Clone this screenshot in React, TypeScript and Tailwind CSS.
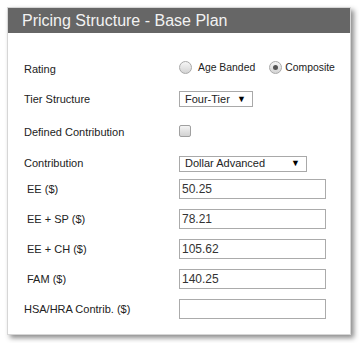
import React from "react";

const font = { fontFamily: '"Liberation Sans", Arial, sans-serif' };

// Radio button drawn with divs so it looks the same in every browser
const Radio = ({ checked }: { checked?: boolean }) => (
    <span className="w-[13px] h-[13px] rounded-full border border-[#a9a9a9] bg-gradient-to-b from-[#f6f6f6] to-[#d4d4d4] flex items-center justify-center">
        {checked && <span className="w-[5px] h-[5px] rounded-full bg-[#555]" />}
    </span>
);

const FakeSelect = ({ value, width }: { value: string; width: string }) => (
    <div className={`${width} h-[16px] border border-[#a9a9a9] bg-white flex items-center justify-between pl-[5px] pr-[6px] text-[11px] text-[#222]`}>
        <span>{value}</span>
        <span className="text-[9px] leading-none text-black">▼</span>
    </div>
);

const amounts = [
    { label: "EE ($)", value: "50.25" },
    { label: "EE + SP ($)", value: "78.21" },
    { label: "EE + CH ($)", value: "105.62" },
    { label: "FAM ($)", value: "140.25" },
];

const App: React.FC = () => {
    return (
        <div className="w-[359px] h-[343px] bg-white pt-[7px] pl-[7px]" style={font}>
            <div className="w-[344px] h-[328px] border border-[#d6d6d6] bg-white shadow-[3px_3px_5px_rgba(0,0,0,0.45)] flex flex-col">
                {/* Header */}
                <div className="h-[25px] bg-[#666666] text-[#f2f2f2] text-[16px] leading-[25px] pl-[14px]">
                    Pricing Structure - Base Plan
                </div>

                <div className="flex flex-col pl-[16px] pt-[21px] text-[11px] text-[#222]">
                    {/* Rating */}
                    <div className="h-[30px] flex items-center">
                        <span className="w-[155px]">Rating</span>
                        <div className="flex items-center -mt-[3px] text-[10.4px]">
                            <Radio />
                            <span className="ml-[6px]">Age Banded</span>
                            <span className="ml-[14px]"><Radio checked /></span>
                            <span className="ml-[3px]">Composite</span>
                        </div>
                    </div>

                    {/* Tier Structure */}
                    <div className="h-[30px] flex items-center">
                        <span className="w-[155px]">Tier Structure</span>
                        <FakeSelect value="Four-Tier" width="w-[74px]" />
                    </div>

                    {/* Defined Contribution */}
                    <div className="h-[36px] flex items-center">
                        <span className="w-[155px]">Defined Contribution</span>
                        <span className="w-[12px] h-[12px] rounded-[2px] border border-[#a0a0a0] bg-gradient-to-b from-[#f4f4f4] to-[#d2d2d2] -mt-[2px]" />
                    </div>

                    {/* Contribution */}
                    <div className="h-[27px] flex items-center">
                        <span className="w-[155px]">Contribution</span>
                        <FakeSelect value="Dollar Advanced" width="w-[128px]" />
                    </div>

                    <div className="flex flex-col gap-[10px] mt-[2px]">
                        {amounts.map((a) => (
                            <div key={a.label} className="h-[20px] flex items-center">
                                <span className="w-[155px] pl-[3px]">{a.label}</span>
                                <div className="w-[147px] h-[20px] border border-[#ababab] flex items-center pl-[2px] text-[12px] text-[#333]">
                                    {a.value}
                                </div>
                            </div>
                        ))}
                        <div className="h-[20px] flex items-center">
                            <span className="w-[155px]">HSA/HRA Contrib. ($)</span>
                            <div className="w-[147px] h-[20px] border border-[#ababab]" />
                        </div>
                    </div>
                </div>
            </div>
        </div>
    );
};

export default App;
